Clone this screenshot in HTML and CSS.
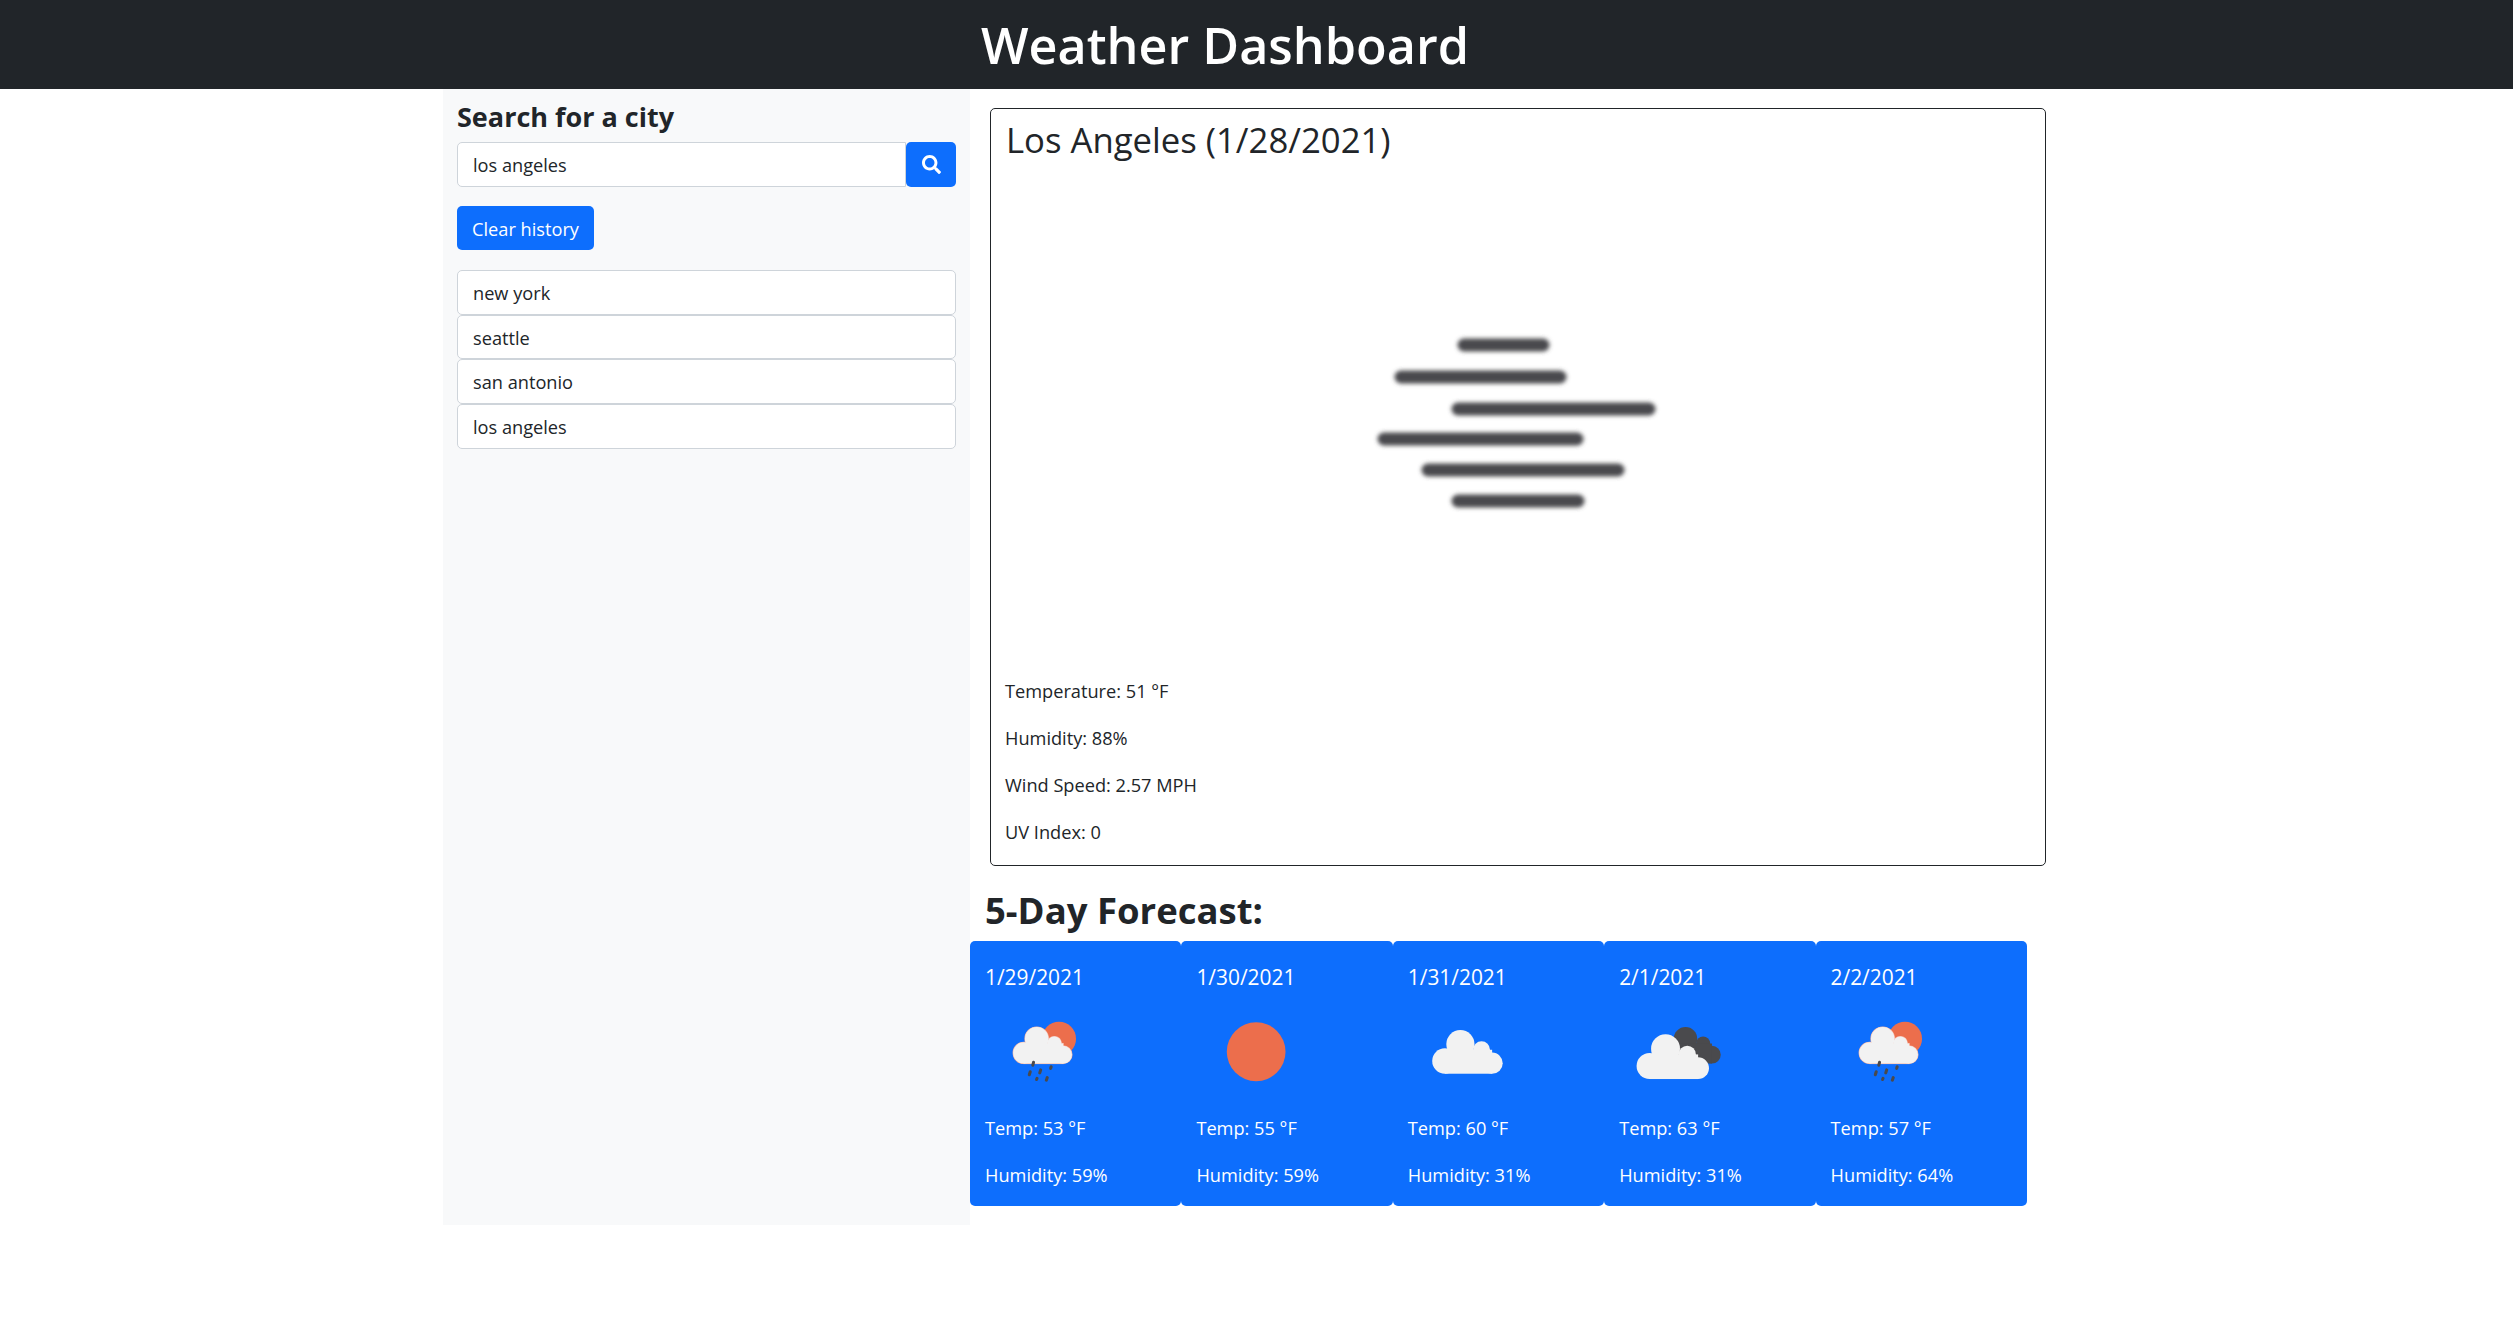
FILE: index.html
```html
<!DOCTYPE html>
<html lang="en">
<head>
    <meta charset="UTF-8">
    <meta name="viewport" content="width=device-width, initial-scale=1.0">
    <title>Weather Dashboard</title>
    <link rel="stylesheet" href="styles.css">
</head>
<body>

    <!-- Shared cloud shape for the forecast icons -->
    <svg class="icon-defs" aria-hidden="true">
        <defs>
            <g id="cloud">
                <circle cx="33" cy="51" r="9"/>
                <circle cx="44" cy="39" r="10"/>
                <circle cx="59" cy="43" r="6"/>
                <circle cx="66.5" cy="52.5" r="7.5"/>
                <rect x="33" y="43" width="33.5" height="17"/>
            </g>
            <g id="rain-cloud">
                <circle cx="63" cy="39" r="14.5" fill="#ec6e4c"/>
                <use href="#cloud" fill="#f2f2f2" stroke="#f6b5a3" stroke-width="1"/>
                <use href="#cloud" fill="#f2f2f2"/>
                <path d="M41.3 59l-.6 2.4M38.5 67l-.8 2.6M47.4 65.4l-.8 2.6M56.3 62.8l-.4 1.4M44.3 72.6l-.4 1M53 72l-.8 2.2" stroke="#4a4a4d" stroke-width="2.6" stroke-linecap="round" fill="none"/>
            </g>
        </defs>
    </svg>

    <header class="page-header">
        <h1>Weather Dashboard</h1>
    </header>

    <div class="layout">
        <aside class="sidebar">
            <h4>Search for a city</h4>
            <div class="search-group">
                <input type="text" class="search-input" value="los angeles">
                <button class="btn search-btn" aria-label="Search">
                    <svg viewBox="0 0 512 512" class="search-icon"><path d="M505 442.7L405.3 343c-4.5-4.5-10.6-7-17-7H372c27.6-35.3 44-79.7 44-128C416 93.1 322.9 0 208 0S0 93.1 0 208s93.1 208 208 208c48.3 0 92.7-16.4 128-44v16.3c0 6.4 2.5 12.5 7 17l99.7 99.7c9.4 9.4 24.6 9.4 33.9 0l28.3-28.3c9.4-9.4 9.4-24.6.1-34zM208 336c-70.7 0-128-57.2-128-128 0-70.7 57.2-128 128-128 70.7 0 128 57.2 128 128 0 70.7-57.2 128-128 128z"/></svg>
                </button>
            </div>
            <button class="btn clear-btn">Clear history</button>
            <ul class="history">
                <li>new york</li>
                <li>seattle</li>
                <li>san antonio</li>
                <li>los angeles</li>
            </ul>
        </aside>

        <main class="main">
            <section class="today">
                <h2>Los Angeles (1/28/2021)</h2>
                <svg class="today-icon" viewBox="0 0 470 470">
                    <defs>
                        <filter id="soft"><feGaussianBlur stdDeviation="2.2"/></filter>
                    </defs>
                    <g filter="url(#soft)" stroke="#4a4a4d" stroke-width="13" stroke-linecap="round">
                        <path d="M181 157H260"/>
                        <path d="M118 189H277"/>
                        <path d="M175 221H366"/>
                        <path d="M101 251H294"/>
                        <path d="M145 282H335"/>
                        <path d="M175 313H295"/>
                    </g>
                </svg>
                <p>Temperature: 51 °F</p>
                <p>Humidity: 88%</p>
                <p>Wind Speed: 2.57 MPH</p>
                <p>UV Index: 0</p>
            </section>

            <h3 class="forecast-title">5-Day Forecast:</h3>
            <div class="forecast">
                <div class="day">
                    <h5>1/29/2021</h5>
                    <svg class="day-icon" viewBox="0 0 100 100"><use href="#rain-cloud"/></svg>
                    <p>Temp: 53 °F</p>
                    <p>Humidity: 59%</p>
                </div>
                <div class="day">
                    <h5>1/30/2021</h5>
                    <svg class="day-icon" viewBox="0 0 100 100"><circle cx="51.2" cy="50" r="25" fill="#ec6e4c"/></svg>
                    <p>Temp: 55 °F</p>
                    <p>Humidity: 59%</p>
                </div>
                <div class="day">
                    <h5>1/31/2021</h5>
                    <svg class="day-icon" viewBox="0 0 100 100"><use href="#cloud" fill="#f2f2f2" transform="translate(-8.2 -3.3) scale(1.2)"/></svg>
                    <p>Temp: 60 °F</p>
                    <p>Humidity: 31%</p>
                </div>
                <div class="day">
                    <h5>2/1/2021</h5>
                    <svg class="day-icon" viewBox="0 0 100 100">
                        <use href="#cloud" fill="#4a4a4d" transform="translate(12.6 0)"/>
                        <use href="#cloud" fill="#f2f2f2" transform="translate(-14.6 -.7) scale(1.232)"/>
                    </svg>
                    <p>Temp: 63 °F</p>
                    <p>Humidity: 31%</p>
                </div>
                <div class="day">
                    <h5>2/2/2021</h5>
                    <svg class="day-icon" viewBox="0 0 100 100"><use href="#rain-cloud"/></svg>
                    <p>Temp: 57 °F</p>
                    <p>Humidity: 64%</p>
                </div>
            </div>
        </main>
    </div>

</body>
</html>
```

FILE: styles.css
```css
* {
    box-sizing: border-box;
}

body {
    margin: 0;
    background-color: #ffffff;
    color: #212529;
    font-family: "Open Sans", "Noto Sans", Arial, sans-serif;
    font-size: 18.2px;
    line-height: 28.2px;
}

h1, h2, h3, h4, h5, p, ul {
    margin: 0;
    padding: 0;
}

.icon-defs {
    position: absolute;
    width: 0;
    height: 0;
}

/* Header */
.page-header {
    height: 89px;
    padding-right: 63px;
    background-color: #212529;
    color: #ffffff;
    text-align: center;
}

.page-header h1 {
    font-size: 50.3px;
    font-weight: 600;
    line-height: 89px;
}

/* Page columns */
.layout {
    display: flex;
    width: 1627px;
    margin: 0 auto;
}

.sidebar {
    width: 527px;
    padding: 11px 14px 0;
    background-color: #f8f9fa;
}

.sidebar h4 {
    font-size: 27px;
    font-weight: 700;
    line-height: 33px;
    margin-bottom: 9px;
}

.search-group {
    display: flex;
    height: 45px;
    margin-bottom: 19px;
}

.search-input {
    flex: 1;
    min-width: 0;
    padding: 2px 15px 0;
    border: 1px solid #ced4da;
    border-radius: 5px 0 0 5px;
    background-color: #ffffff;
    color: #212529;
    font: inherit;
}

.btn {
    border: none;
    border-radius: 5px;
    background-color: #0d6efd;
    color: #ffffff;
    font: inherit;
}

.search-btn {
    display: flex;
    align-items: center;
    justify-content: center;
    width: 50px;
    padding: 0;
}

.search-icon {
    width: 19px;
    height: 19px;
    fill: #ffffff;
}

.clear-btn {
    display: block;
    width: 137px;
    height: 44px;
    padding: 2px 0 0;
    margin-bottom: 20px;
}

.history {
    list-style: none;
}

.history li {
    height: 44.7px;
    padding: 8px 15px;
    border: 1px solid #ced4da;
    border-radius: 5px;
    background-color: #ffffff;
}

.main {
    width: 1057px;
}

/* Current weather */
.today {
    width: 1056px;
    margin: 19px 0 0 20px;
    padding: 8px 14px 0;
    border: 1px solid #212529;
    border-radius: 5px;
}

.today h2 {
    padding-left: 1px;
    font-size: 34.7px;
    font-weight: 400;
    line-height: 45px;
}

.today-icon {
    display: block;
    width: 470px;
    height: 470px;
    margin: 26px auto 19px;
}

.today p {
    margin-bottom: 18.8px;
}

/* Forecast */
.forecast-title {
    padding: 24px 0 11px 15px;
    font-size: 36.5px;
    font-weight: 700;
    line-height: 40px;
}

.forecast {
    display: flex;
    margin-bottom: 19px;
}

.day {
    width: 211.4px;
    height: 265px;
    padding: 22px 15px 0;
    border-radius: 5px;
    background-color: #0d6efd;
    color: #ffffff;
}

.day h5 {
    font-size: 20.9px;
    font-weight: 400;
    line-height: 28px;
    margin-bottom: 2px;
}

.day-icon {
    display: block;
    width: 117.5px;
    height: 117.5px;
    margin-bottom: 3px;
}

.day p {
    margin-bottom: 18.8px;
}
```
